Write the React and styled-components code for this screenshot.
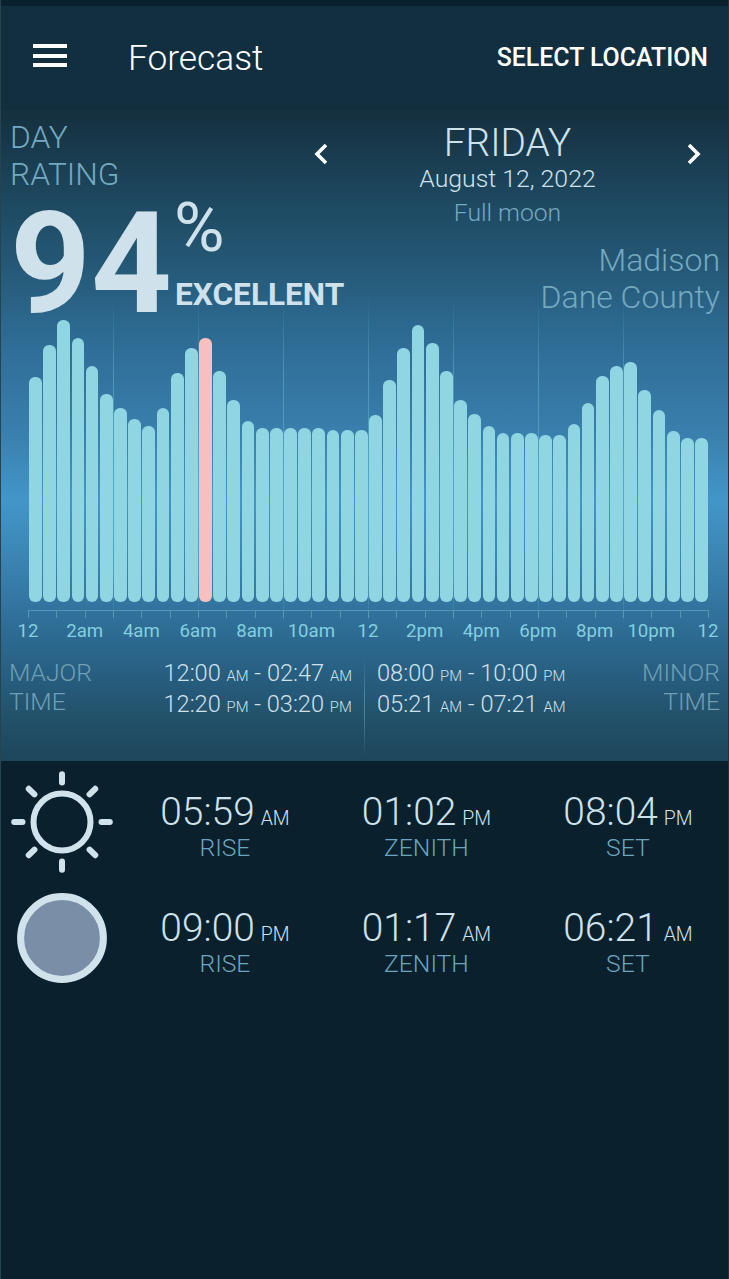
import React from 'react';
import styled, { createGlobalStyle } from 'styled-components';

const GlobalStyle = createGlobalStyle`
  * {
    box-sizing: border-box;
  }
  body {
    margin: 0;
    background: #0a202c;
    font-family: Roboto, 'Liberation Sans', sans-serif;
    font-weight: 300;
    color: #cfe2ec;
  }
`

const Screen = styled.div`
  width: 729px;
  height: 1279px;
  padding-top: 6px;
  overflow: hidden;
  background: #0a202c;
  border-left: 1px solid rgba(120, 170, 190, 0.25);
  border-right: 1px solid rgba(120, 170, 190, 0.15);
`

const Header = styled.header`
  display: flex;
  align-items: center;
  height: 100px;
  padding: 0 20px 0 32px;
  background: #122f3f;
  color: #fff;
`

const MenuButton = styled.button`
  display: flex;
  flex-direction: column;
  justify-content: space-between;
  width: 34px;
  height: 23px;
  margin-bottom: 1px;
  padding: 0;
  border: 0;
  background: none;
`

const MenuLine = styled.span`
  height: 4px;
  background: #fff;
`

const Title = styled.h1`
  flex: 1;
  margin: 0 0 0 61px;
  padding-top: 3px;
  font-size: 35.3px;
  font-weight: 300;
  line-height: 42px;
`

const LocationButton = styled.button`
  padding: 4px 0 0;
  border: 0;
  background: none;
  color: #fff;
  font: 500 24.9px/30px Roboto, sans-serif;
`

const Panel = styled.section`
  display: flex;
  flex-direction: column;
  height: 655px;
  background: linear-gradient(
    #112c3c 0,
    #15303f 6px,
    #1d475e 90px,
    #265b7a 170px,
    #2d6a92 225px,
    #3a80ae 330px,
    #4396c9 394px,
    #3a82b0 460px,
    #2f6f98 515px,
    #275e80 570px,
    #225068 615px,
    #1e465c 655px
  );
`

const Summary = styled.div`
  display: flex;
  height: 213px;
  white-space: nowrap;
`

const Rating = styled.div`
  flex: none;
  width: 304px;
  padding: 13px 0 0 9px;
`

const Caption = styled.div`
  color: ${props => props.color || '#74a9c0'};
  font-size: ${props => props.size || 24.7}px;
  line-height: ${props => props.line || 29}px;
  text-align: ${props => props.align || 'left'};
`

const Score = styled.div`
  display: flex;
  height: 126px;
`

const ScoreValue = styled.div`
  flex: none;
  width: 165px;
  font-size: 141px;
  font-weight: 700;
  line-height: 142px;
`

const ScoreNote = styled.div`
  display: flex;
  flex-direction: column;
`

const Percent = styled.div`
  margin-left: -1px;
  font-size: 69px;
  font-weight: 400;
  line-height: 70px;
  height: 84px;
`

const Verdict = styled.div`
  font-size: 31.6px;
  font-weight: 700;
  line-height: 36px;
`

const DayColumn = styled.div`
  flex: 1;
  padding-right: 8px;
`

const DayPicker = styled.div`
  display: flex;
  justify-content: space-between;
  height: 136px;
  padding: 15px 18px 0 8px;
`

const Arrow = styled.svg`
  width: 16px;
  height: 22px;
  margin-top: 22px;
  fill: none;
  stroke: #fff;
  stroke-width: 3.6;
`

const Day = styled.div`
  text-align: center;
`

const DayName = styled.div`
  font-size: 38.8px;
  line-height: 44px;
`

const DayDate = styled.div`
  font-size: 24.8px;
  line-height: 27px;
`

const Chart = styled.div`
  position: relative;
  height: 291px;
  margin-left: 27px;
  width: 680px;
`

const Bars = styled.div`
  display: flex;
  align-items: flex-end;
  height: 283px;
`

const Slot = styled.div`
  flex: 1;
  padding: 0 0.4px 0 1px;
`

const Bar = styled.div`
  border-radius: 6px;
  background: ${props => (props.$now ? '#f7bfbf' : '#8fd5e2')};
`

const GridLines = styled.div`
  position: absolute;
  top: -24px;
  left: 85px;
  display: flex;
  gap: 84px;
`

const GridLine = styled.div`
  width: 1px;
  height: 330px;
  background: linear-gradient(rgba(110, 190, 215, 0), rgba(110, 190, 215, 0.45) 25%, rgba(110, 190, 215, 0.45) 85%, rgba(110, 190, 215, 0));
`

const Axis = styled.div`
  display: flex;
  justify-content: space-between;
  width: 681px;
  height: 8px;
  margin-left: 27px;
  border-top: 1px solid #5397b5;
`

const Tick = styled.div`
  width: 1px;
  height: 7px;
  background: #5397b5;
`

const Hours = styled.div`
  display: flex;
  width: 737px;
  padding-top: 1px;
  margin-left: -1.3px;
`

const Hour = styled.div`
  width: 56.67px;
  flex: none;
  text-align: center;
  color: #84cfdf;
  font-size: 18.6px;
  font-weight: 400;
  line-height: 24px;
`

const Periods = styled.div`
  display: flex;
  justify-content: space-between;
  margin-top: 13px;
  height: 102px;
  padding: 0 8px;
`

const PeriodGroup = styled.div`
  display: flex;
  justify-content: space-between;
  flex: 1;
  padding: ${props => (props.$right ? '0 0 0 12px' : '0 12px 0 0')};
`

const PeriodLabel = styled(Caption)`
  padding-top: 2px;
  color: #6f9fb5;
`

const Divider = styled.div`
  width: 1px;
  height: 98px;
  margin-top: 2px;
  background: linear-gradient(rgba(110, 180, 205, 0), rgba(110, 180, 205, 0.5) 40%, rgba(110, 180, 205, 0.5) 60%, rgba(110, 180, 205, 0));
`

const Ranges = styled.div`
  padding-top: 2px;
  font-size: 23.6px;
  line-height: 31px;
  white-space: nowrap;
  small {
    font-size: 14.8px;
    line-height: 0;
  }
`

const Body = styled.div`
  display: flex;
  height: 115.5px;
`

const BodyIcon = styled.svg`
  flex: none;
  width: 104px;
  height: 104px;
  margin: 9.3px 10.5px 0 8.7px;
`

const BodyTime = styled.div`
  width: 201.5px;
  padding-top: 28px;
  text-align: center;
  flex: none;
`

const Clock = styled.div`
  font-size: 38.9px;
  line-height: 46px;
  white-space: nowrap;
  small {
    margin-left: 6px;
    font-size: 19.4px;
    line-height: 0;
  }
`

const tops = [
  376.5, 344.5, 320, 337.5, 366, 394, 408, 419, 426, 408, 373, 348,
  337.5, 371, 399.5, 421, 428, 428, 428, 428, 428, 429.7, 429.7, 429.7,
  415.3, 380, 348, 325, 343, 371, 399.7, 414, 426, 433, 433, 433,
  435, 435, 424.3, 403, 376, 365.7, 362, 390.3, 410, 431.3, 438.3, 438.3
]
const levels = tops.map(top => 602 - top)
const currentSlot = 12

const hours = ['12', '2am', '4am', '6am', '8am', '10am', '12', '2pm', '4pm', '6pm', '8pm', '10pm', '12']

const sunTimes = [['05:59', 'AM', 'RISE'], ['01:02', 'PM', 'ZENITH'], ['08:04', 'PM', 'SET']]
const moonTimes = [['09:00', 'PM', 'RISE'], ['01:17', 'AM', 'ZENITH'], ['06:21', 'AM', 'SET']]

const Range = ({ from, to }) => (
  <div>
    {from[0]} <small>{from[1]}</small> - {to[0]} <small>{to[1]}</small>
  </div>
)

const Times = ({ times }) => times.map(([time, half, label]) => (
  <BodyTime key={label}>
    <Clock>{time}<small>{half}</small></Clock>
    <Caption align="center" color="#6ba4bf" line={25}>{label}</Caption>
  </BodyTime>
))

const SunIcon = () => (
  <BodyIcon viewBox="-52 -52 104 104" fill="none" stroke="#d0e3ed" strokeWidth="6" strokeLinecap="round">
    <circle r="28.5" />
    {[0, 45, 90, 135, 180, 225, 270, 315].map(angle => (
      <path key={angle} d={angle % 90 ? 'M39 0H47' : 'M39.5 0H47.8'} transform={`rotate(${angle})`} />
    ))}
  </BodyIcon>
)

const MoonIcon = () => (
  <BodyIcon viewBox="-52 -52 104 104">
    <circle r="41.4" fill="#7a8ea8" stroke="#d0e3ed" strokeWidth="7" />
  </BodyIcon>
)

export default () => {
  return (
    <Screen>
      <GlobalStyle />
      <Header>
        <MenuButton aria-label="Menu">
          <MenuLine />
          <MenuLine />
          <MenuLine />
        </MenuButton>
        <Title>Forecast</Title>
        <LocationButton>SELECT LOCATION</LocationButton>
      </Header>
      <Panel>
        <Summary>
          <Rating>
            <Caption size={31.7} line={37}>DAY<br />RATING</Caption>
            <Score>
              <ScoreValue>94</ScoreValue>
              <ScoreNote>
                <Percent>%</Percent>
                <Verdict>EXCELLENT</Verdict>
              </ScoreNote>
            </Score>
          </Rating>
          <DayColumn>
            <DayPicker>
              <Arrow viewBox="0 0 16 22"><path d="M13 2L4 11L13 20" /></Arrow>
              <Day>
                <DayName>FRIDAY</DayName>
                <DayDate>August 12, 2022</DayDate>
                <Caption align="center" line={41}>Full moon</Caption>
              </Day>
              <Arrow viewBox="0 0 16 22"><path d="M3 2L12 11L3 20" /></Arrow>
            </DayPicker>
            <Caption size={32} line={37} align="right">Madison<br />Dane County</Caption>
          </DayColumn>
        </Summary>
        <Chart>
          <GridLines>
            {[3, 6, 9, 12, 15, 18, 21].map(hour => <GridLine key={hour} />)}
          </GridLines>
          <Bars>
            {levels.map((level, i) => (
              <Slot key={i}>
                <Bar $now={i === currentSlot} style={{ height: level }} />
              </Slot>
            ))}
          </Bars>
        </Chart>
        <Axis>
          {Array.from({ length: 25 }, (_, i) => <Tick key={i} />)}
        </Axis>
        <Hours>
          {hours.map((hour, i) => <Hour key={i}>{hour}</Hour>)}
        </Hours>
        <Periods>
          <PeriodGroup>
            <PeriodLabel>MAJOR<br />TIME</PeriodLabel>
            <Ranges>
              <Range from={['12:00', 'AM']} to={['02:47', 'AM']} />
              <Range from={['12:20', 'PM']} to={['03:20', 'PM']} />
            </Ranges>
          </PeriodGroup>
          <Divider />
          <PeriodGroup $right>
            <Ranges>
              <Range from={['08:00', 'PM']} to={['10:00', 'PM']} />
              <Range from={['05:21', 'AM']} to={['07:21', 'AM']} />
            </Ranges>
            <PeriodLabel align="right">MINOR<br />TIME</PeriodLabel>
          </PeriodGroup>
        </Periods>
      </Panel>
      <Body>
        <SunIcon />
        <Times times={sunTimes} />
      </Body>
      <Body>
        <MoonIcon />
        <Times times={moonTimes} />
      </Body>
    </Screen>
  )
}
